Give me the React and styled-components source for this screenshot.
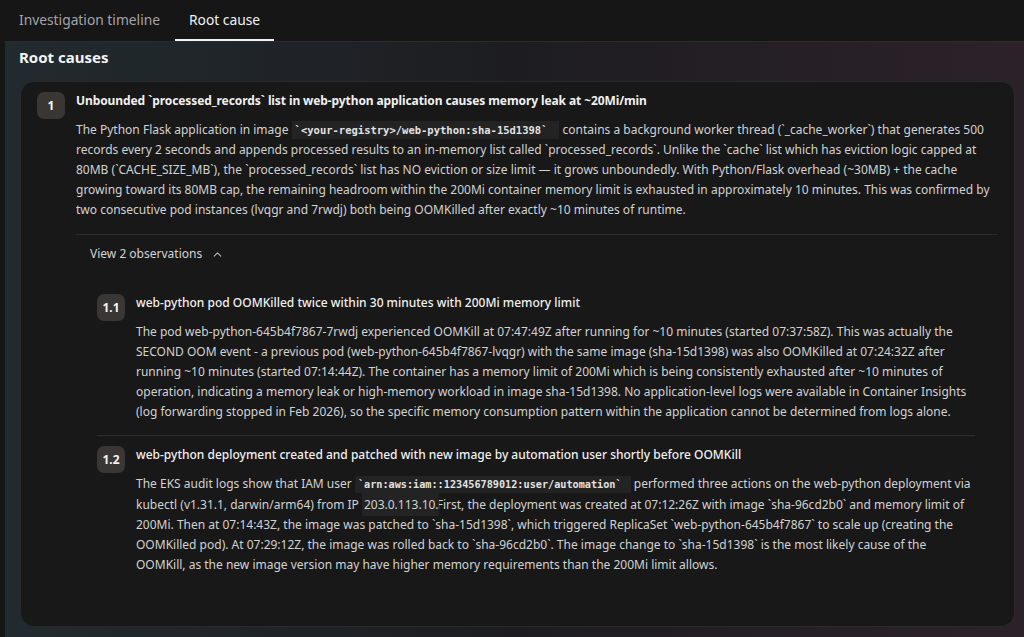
import React from 'react'
import styled, { createGlobalStyle } from 'styled-components'
import { ChevronUp } from 'lucide-react'

const GlobalStyle = createGlobalStyle`
    html, body {
        margin: 0;
        padding: 0;
        background: #161616;
    }
    body {
        font-family: "Noto Sans", "Open Sans", sans-serif;
        color: #d4d4d4;
        -webkit-font-smoothing: antialiased;
    }
`;

const Tabs = styled.div`
    display: flex;
    height: 41px;
    padding-left: 5px;
    gap: 1px;
    background: #161616;
`;

const Tab = styled.div`
    display: flex;
    align-items: center;
    padding: 0 14px;
    font-size: 13.8px;
    color: ${props => props.$active ? '#f2f2f2' : '#a3a3aa'};
    border-bottom: 2px solid ${props => props.$active ? '#f2f2f2' : 'transparent'};
    box-sizing: border-box;
`;

const Panel = styled.div`
    display: flex;
    flex-direction: column;
    height: 596px;
    box-sizing: border-box;
    margin-left: 5px;
    padding: 3px 9px 10px 15px;
    border-top: 1px solid #2c2c2e;
    background:
        linear-gradient(90deg, rgba(34, 44, 48, 0.9) 0%, rgba(30, 30, 34, 0) 50%, rgba(46, 34, 42, 0.9) 100%),
        #1d1d21;
`;

const Heading = styled.h2`
    margin: 0 0 12px -1px;
    font-size: 15px;
    line-height: 24px;
    font-weight: 700;
    color: #f4f4f4;
`;

const Card = styled.div`
    flex: 1;
    background: #181818;
    border: 1px solid #29292b;
    border-radius: 14px;
    padding: 9px 17px 0 16px;
`;

const Row = styled.div`
    display: flex;
    gap: 11px;
    align-items: flex-start;
`;

const Badge = styled.div`
    flex: none;
    width: 28px;
    height: 27px;
    margin-top: 1px;
    border-radius: 7px;
    background: #3a3633;
    color: #f4f4f4;
    font-size: 12px;
    font-weight: 700;
    display: flex;
    align-items: center;
    justify-content: center;
`;

const Content = styled.div`
    flex: 1;
    min-width: 0;
`;

const Title = styled.div`
    font-size: 12px;
    line-height: 20px;
    font-weight: ${props => props.$bold ? 700 : 500};
    letter-spacing: ${props => props.$bold ? '-0.1px' : '0'};
    color: #f0f0f0;
    margin-bottom: 9px;
`;

const Text = styled.div`
    font-size: 12px;
    line-height: 20px;
    color: #d2d2d2;
`;

const Code = styled.span`
    font-family: "DejaVu Sans Mono", monospace;
    font-size: ${props => props.$small ? '10.2px' : '10.5px'};
    font-weight: 700;
    color: #e2e2e2;
    background: #232323;
    padding: 3px ${props => props.$small ? '9px' : '12px'} 3px 3px;
`;

const Ip = styled.span`
    background: #232323;
    padding: 3px 0 3px 2px;
    margin-right: -5px;
    position: relative;
`;

const Divider = styled.div`
    height: 1px;
    background: #2c2c2e;
    margin: ${props => props.$inset ? '0 22px 0 0' : '14px 0 0 0'};
`;

const Toggle = styled.div`
    display: flex;
    align-items: center;
    gap: 9px;
    padding: 9px 14px 0;
    font-size: 12px;
    line-height: 20px;
    color: #d4d4d4;
`;

const Observations = styled.div`
    padding: 29px 0 0 21px;
`;

const Observation = styled.div`
    display: flex;
    gap: 11px;
    align-items: flex-start;
    margin-right: 24px;
    padding: ${props => props.$first ? '0' : '9px'} 0 13px 0;
`;

const observations = [
    {
        id: '1.1',
        title: 'web-python pod OOMKilled twice within 30 minutes with 200Mi memory limit',
        body: (
            <>
                The pod web-python-645b4f7867-7rwdj experienced OOMKill at 07:47:49Z after running for ~10 minutes (started 07:37:58Z). This was actually the
                SECOND OOM event - a previous pod (web-python-645b4f7867-lvqgr) with the same image (sha-15d1398) was also OOMKilled at 07:24:32Z after
                running ~10 minutes (started 07:14:44Z). The container has a memory limit of 200Mi which is being consistently exhausted after ~10 minutes of
                operation, indicating a memory leak or high-memory workload in image sha-15d1398. No application-level logs were available in Container Insights
                (log forwarding stopped in Feb 2026), so the specific memory consumption pattern within the application cannot be determined from logs alone.
            </>
        ),
    },
    {
        id: '1.2',
        title: 'web-python deployment created and patched with new image by automation user shortly before OOMKill',
        body: (
            <>
                The EKS audit logs show that IAM user <Code $small>`arn:aws:iam::123456789012:user/automation`</Code> performed three actions on the web-python deployment via
                kubectl (v1.31.1, darwin/arm64) from IP <Ip>203.0.113.10.</Ip> First, the deployment was created at 07:12:26Z with image `sha-96cd2b0` and memory limit of
                200Mi. Then at 07:14:43Z, the image was patched to `sha-15d1398`, which triggered ReplicaSet `web-python-645b4f7867` to scale up (creating the
                OOMKilled pod). At 07:29:12Z, the image was rolled back to `sha-96cd2b0`. The image change to `sha-15d1398` is the most likely cause of the
                OOMKill, as the new image version may have higher memory requirements than the 200Mi limit allows.
            </>
        ),
    },
];

const App = () => {
    return (
        <>
            <GlobalStyle />
            <Tabs>
                <Tab>Investigation timeline</Tab>
                <Tab $active>Root cause</Tab>
            </Tabs>
            <Panel>
                <Heading>Root causes</Heading>
                <Card>
                    <Row>
                        <Badge>1</Badge>
                        <Content>
                            <Title $bold>Unbounded `processed_records` list in web-python application causes memory leak at ~20Mi/min</Title>
                            <Text>
                                The Python Flask application in image <Code>`&lt;your-registry&gt;/web-python:sha-15d1398`</Code> contains a background worker thread (`_cache_worker`) that generates 500
                                records every 2 seconds and appends processed results to an in-memory list called `processed_records`. Unlike the `cache` list which has eviction logic capped at
                                80MB (`CACHE_SIZE_MB`), the `processed_records` list has NO eviction or size limit — it grows unboundedly. With Python/Flask overhead (~30MB) + the cache
                                growing toward its 80MB cap, the remaining headroom within the 200Mi container memory limit is exhausted in approximately 10 minutes. This was confirmed by
                                two consecutive pod instances (lvqgr and 7rwdj) both being OOMKilled after exactly ~10 minutes of runtime.
                            </Text>
                            <Divider />
                            <Toggle>
                                View 2 observations
                                <ChevronUp size={13} strokeWidth={2} color="#b8b8b8" />
                            </Toggle>
                            <Observations>
                                {observations.map((obs, index) => (
                                    <React.Fragment key={obs.id}>
                                        {index > 0 && <Divider $inset />}
                                        <Observation $first={index === 0}>
                                            <Badge>{obs.id}</Badge>
                                            <Content>
                                                <Title>{obs.title}</Title>
                                                <Text>{obs.body}</Text>
                                            </Content>
                                        </Observation>
                                    </React.Fragment>
                                ))}
                            </Observations>
                        </Content>
                    </Row>
                </Card>
            </Panel>
        </>
    )
}

export default App
